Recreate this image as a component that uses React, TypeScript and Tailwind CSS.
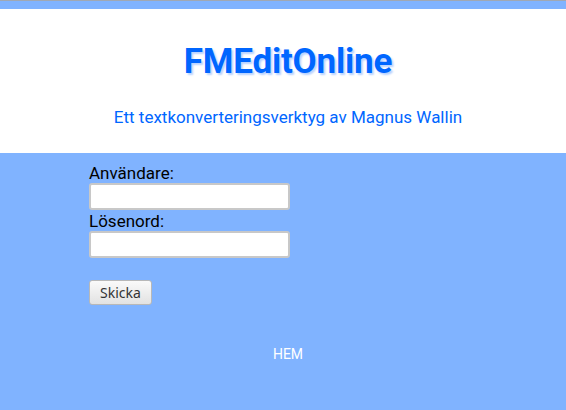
import { useState } from "react"

const App = () => {
  const [user, setUser] = useState("")
  const [pass, setPass] = useState("")

  return (
    <div className="min-h-[410px] bg-[#80b3ff] border-t border-[#a0a8b4] font-['Roboto',sans-serif]">
      {/* header */}
      <div className="mt-2 bg-white h-[144px] pl-[10px] flex flex-col items-center">
        <h1 className="mt-[32px] text-[35px] leading-[42px] font-bold text-[#0066ff] [text-shadow:2px_2px_2px_#b8d2ff] tracking-[-0.2px]">
          FMEditOnline
        </h1>
        <div className="mt-[24px] text-[17px] leading-[20px] text-[#0066ff]">
          Ett textkonverteringsverktyg av Magnus Wallin
        </div>
      </div>

      {/* formulär */}
      <form className="pl-[89px] pt-[10px] flex flex-col items-start" onSubmit={(e) => e.preventDefault()}>
        <label className="text-[17px] leading-[20px] text-black">Användare:</label>
        <input
          value={user}
          onChange={(e) => setUser(e.target.value)}
          className="w-[201px] h-[27px] bg-white border-2 border-[#c8c8c8] rounded-[3px] px-1 outline-none"
        />
        <label className="mt-px text-[17px] leading-[20px] text-black">Lösenord:</label>
        <input
          type="password"
          value={pass}
          onChange={(e) => setPass(e.target.value)}
          className="w-[201px] h-[27px] bg-white border-2 border-[#c8c8c8] rounded-[3px] px-1 outline-none"
        />
        <button
          type="submit"
          className="mt-[22px] w-[63px] h-[25px] rounded-[3px] border border-[#b8b8b8] bg-gradient-to-b from-[#fafafa] to-[#e2e2e2] text-[14px] text-[#333] font-['Noto_Sans',sans-serif]">
          Skicka
        </button>
      </form>

      {/* länk */}
      <div className="mt-[40px] pl-[10px] text-center text-[14px] leading-[18px] text-white">
        <a href="#">HEM</a>
      </div>
    </div>
  )
}

export default App
